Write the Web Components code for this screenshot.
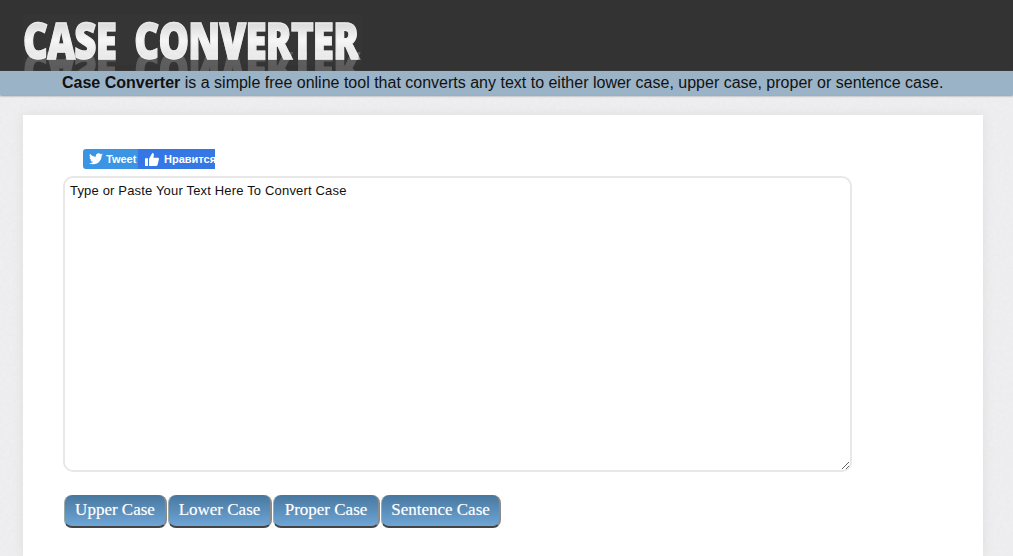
<!DOCTYPE html>
<html lang="en"><head><meta charset="utf-8"><title>Case Converter</title>
<style>
html,body{margin:0;padding:0;height:556px;overflow:hidden}
body{font-family:"Liberation Sans",Arial,sans-serif;background-color:#ececee;background-image:url("data:image/svg+xml,%3Csvg xmlns='http://www.w3.org/2000/svg' width='300' height='300'%3E%3Cfilter id='n'%3E%3CfeTurbulence type='fractalNoise' baseFrequency='.3' numOctaves='3' stitchTiles='stitch'/%3E%3CfeColorMatrix values='0 0 0 0 1 0 0 0 0 1 0 0 0 0 1 .9 0 0 0 -.25'/%3E%3C/filter%3E%3Crect width='300' height='300' filter='url(%23n)' opacity='.35'/%3E%3C/svg%3E")}
</style></head><body>
<cc-header></cc-header>
<cc-tagline><b>Case Converter</b> is a simple free online tool that converts any text to either lower case, upper case, proper or sentence case.</cc-tagline>
<cc-card>
  <cc-social></cc-social>
  <cc-editor></cc-editor>
  <cc-actions>
    <cc-button style="--w:103px">Upper Case</cc-button>
    <cc-button style="--w:104px">Lower Case</cc-button>
    <cc-button style="--w:107px">Proper Case</cc-button>
    <cc-button style="--w:120px">Sentence Case</cc-button>
  </cc-actions>
</cc-card>
<script>
function def(name,html){customElements.define(name,class extends HTMLElement{constructor(){super();this.attachShadow({mode:'open'}).innerHTML=html}})}
def('cc-header',`<style>
:host{display:block;height:71px;background:#333;overflow:hidden;padding:21px 0 0 23px;box-sizing:border-box}
.logo{display:block;position:relative;width:339px;height:50px;background:#353535}
.t{display:block;width:max-content;margin:-6px 0 0;font:800 49px/50px "Open Sans",sans-serif;letter-spacing:-1px;white-space:pre;transform-origin:0 0;transform:scaleX(.784);
background:linear-gradient(#dedede 22%,#f6f6f6 50%,#e2e2e2 88%);-webkit-background-clip:text;background-clip:text;color:transparent;padding:0;
-webkit-text-stroke:1.4px rgba(240,240,240,.6)}
.logo::after{content:"CASE  CONVERTER";position:absolute;left:0;top:32px;font:800 49px/50px "Open Sans",sans-serif;letter-spacing:-1px;white-space:pre;color:#fff;-webkit-text-stroke:1.4px #fff;opacity:.2;transform-origin:0 50%;transform:scale(.784,-1)}
</style><div class="logo"><h1 class="t">CASE  CONVERTER</h1></div>`);
def('cc-tagline',`<style>
:host{display:block;height:24px;background:#9bb3c7;box-shadow:0 1px 2px #8d8d8d;box-sizing:border-box;padding-left:62px;font:16px/23px "Liberation Sans",Arial,sans-serif;color:#111;white-space:nowrap;position:relative}
</style><slot></slot>`);
def('cc-card',`<style>
:host{display:block;margin:20px 30px 0 23px;width:960px;height:441px;background:#fff;box-shadow:0 0 10px #dedede;box-sizing:border-box;padding:34px 0 0 40px}
</style><slot></slot>`);
def('cc-social',`<style>
:host{display:flex;margin-left:20px;height:20px;width:132px;font:bold 11px/20px "Liberation Sans",Arial,sans-serif;color:#fff;white-space:nowrap;overflow:hidden}
.tw{width:55px;background:#3b94e4;border-radius:3px 0 0 3px;display:flex;align-items:center;gap:3px;padding-left:6px;box-sizing:border-box}
.fb{flex:1;min-width:0;background:#3578e5;display:flex;align-items:center;gap:5px;padding-left:7px;overflow:hidden}
svg{flex:none;fill:#fff}
</style>
<div class="tw"><svg width="14" height="12" viewBox="0 0 24 20"><path d="M24 2.4c-.9.4-1.800.7-2.800.8 1-.6 1.800-1.600 2.200-2.700-1 .6-2 1-3.100 1.200A4.900 4.900 0 0 0 11.900 6.200C7.800 6 4.200 4 1.700.9c-1.300 2.200-.7 5.100 1.500 6.500-.8 0-1.600-.2-2.200-.6 0 2.300 1.600 4.400 3.900 4.900-.7.200-1.500.2-2.200.1.600 2 2.400 3.400 4.600 3.400A9.900 9.900 0 0 1 0 16.700 14 14 0 0 0 7.500 19c9.100 0 14.300-7.700 14-14.600 1-.7 1.800-1.500 2.500-2z"/></svg><span>Tweet</span></div>
<div class="fb"><svg width="14" height="13" viewBox="0 0 24 22"><path d="M0 9h5v13H0zM7 9.500 12.500 0c1.800 0 3 1.500 2.700 3.300L14.500 8H22c1.300 0 2.200 1.200 1.900 2.500l-2.300 9.500c-.3 1.200-1.300 2-2.500 2H7z"/></svg><span>Нравится</span></div>`);
def('cc-editor',`<style>
:host{display:block;margin-top:7px}
textarea{display:block;width:789px;height:296px;box-sizing:border-box;margin:0;border:2px solid #e8e8e8;border-radius:10px;padding:5px;font:13px/15px "Liberation Sans",Arial,sans-serif;letter-spacing:.17px;color:#111;background:#fff;outline:0}
</style><textarea spellcheck="false">Type or Paste Your Text Here To Convert Case</textarea>`);
def('cc-actions',`<style>
:host{display:flex;gap:1px;margin:23px 0 0 1px}
</style><slot></slot>`);
def('cc-button',`<style>
:host{display:block}
button{display:block;width:var(--w);height:33px;box-sizing:border-box;padding:0 0 2px;border:0;border-radius:8px;border-right:2px solid #8b8b8b;border-bottom:2px solid #444;border-left:1px solid #9aa;background:linear-gradient(#47779f,#6ea6d6);color:#fff;font:17px/1 "Liberation Serif","Times New Roman",serif;text-shadow:0 0 1px rgba(255,255,255,.45);cursor:pointer}
</style><button type="button"><slot></slot></button>`);
</script>
</body></html>
